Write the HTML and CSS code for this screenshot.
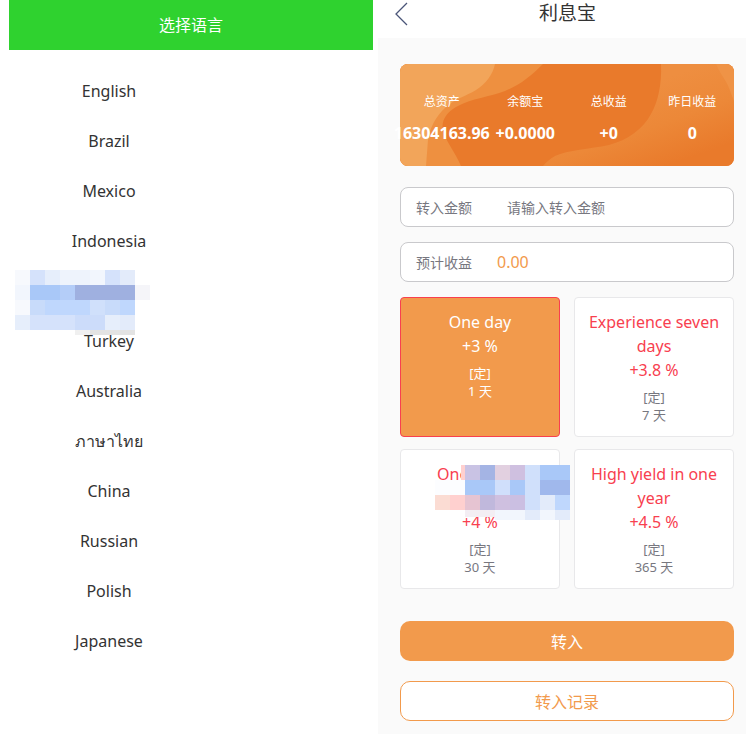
FILE: index.html
```html
<!DOCTYPE html>
<html lang="zh-CN">
<head>
  <meta charset="UTF-8">
  <meta name="viewport" content="width=device-width, initial-scale=1">
  <title>利息宝</title>
  <link rel="stylesheet" href="styles.css">
</head>
<body>
  <div class="page">
    <!-- language picker -->
    <section class="lang-panel">
      <div class="lang-title">选择语言</div>
      <ul class="lang-list">
        <li>English</li>
        <li>Brazil</li>
        <li>Mexico</li>
        <li>Indonesia</li>
        <li></li>
        <li>Turkey</li>
        <li>Australia</li>
        <li>ภาษาไทย</li>
        <li>China</li>
        <li>Russian</li>
        <li>Polish</li>
        <li>Japanese</li>
      </ul>
    </section>

    <!-- interest product -->
    <section class="bao-panel">
      <div class="bao-head">
        <svg class="back-icon" viewBox="0 0 14 24" width="14" height="24">
          <path d="M13 1 L2 12 L13 23" fill="none" stroke="#4a5578" stroke-width="1.3"/>
        </svg>
        <span class="bao-title">利息宝</span>
      </div>

      <div class="bao-body">
        <div class="summary">
          <svg class="summary-bg" viewBox="0 0 334 102" preserveAspectRatio="none">
            <defs>
              <linearGradient id="wave" x1="0.55" y1="0.2" x2="0.95" y2="0.8">
                <stop offset="0" stop-color="#ee8e40"/>
                <stop offset="0.5" stop-color="#ec8838"/>
                <stop offset="1" stop-color="#e97a2b"/>
              </linearGradient>
            </defs>
            <rect width="334" height="102" fill="#e97a2b"/>
            <path d="M143 0 C131 12 120 21 105 27 C90 33 72 34 56 43 C46 49 41 57 43 66 C46 78 54 86 61 102 L0 102 L0 0 Z" fill="#ee9040"/>
            <path d="M95 0 C93 10 86 20 76 26 C66 32 55 35 46 43 C35 53 30 64 28 76 L26 102 L0 102 L0 0 Z" fill="#f2a55a"/>
            <path d="M261 0 C262 20 258 38 251 50 C243 65 228 76 209 81 C190 85 168 86 155 92 C150 95 146 98 143 102 L334 102 L334 0 Z" fill="url(#wave)"/>
            <path d="M316 0 C320 10 326 16 329 24 L334 37 L334 0 Z" fill="#ef9346"/>
          </svg>
          <div class="stat"><span class="stat-label">总资产</span><span class="stat-value">16304163.96</span></div>
          <div class="stat"><span class="stat-label">余额宝</span><span class="stat-value">+0.0000</span></div>
          <div class="stat"><span class="stat-label">总收益</span><span class="stat-value">+0</span></div>
          <div class="stat"><span class="stat-label">昨日收益</span><span class="stat-value">0</span></div>
        </div>

        <div class="field">
          <span class="field-label">转入金额</span>
          <span class="field-hint">请输入转入金额</span>
        </div>
        <div class="field">
          <span class="field-label">预计收益</span>
          <span class="field-money">0.00</span>
        </div>

        <div class="plans">
          <div class="plan plan-on">
            <div class="plan-name">One day</div>
            <div class="plan-rate">+3 %</div>
            <div class="plan-type">[定]</div>
            <div class="plan-days">1 天</div>
          </div>
          <div class="plan">
            <div class="plan-name">Experience seven days</div>
            <div class="plan-rate">+3.8 %</div>
            <div class="plan-type">[定]</div>
            <div class="plan-days">7 天</div>
          </div>
          <div class="plan">
            <div class="plan-name">One month<br>&nbsp;</div>
            <div class="plan-rate">+4 %</div>
            <div class="plan-type">[定]</div>
            <div class="plan-days">30 天</div>
          </div>
          <div class="plan">
            <div class="plan-name">High yield in one year</div>
            <div class="plan-rate">+4.5 %</div>
            <div class="plan-type">[定]</div>
            <div class="plan-days">365 天</div>
          </div>
        </div>

        <button class="btn btn-main">转入</button>
        <button class="btn btn-line">转入记录</button>
      </div>
    </section>
  </div>

  <!-- pixelated patches that cover part of the shot -->
  <div class="mosaic mosaic-left">
    <i class="c1"></i><i class="c2"></i><i class="c3"></i><i class="c4"></i><i class="c4"></i><i class="c5"></i><i class="c2"></i><i class="c6"></i><i></i>
    <i class="c5"></i><i class="c7"></i><i class="c7"></i><i class="c8"></i><i class="c9"></i><i class="c9"></i><i class="c9"></i><i class="c9"></i><i class="c10"></i>
    <i class="c1"></i><i class="c11"></i><i class="c12"></i><i class="c12"></i><i class="c12"></i><i class="c13"></i><i class="c11"></i><i class="c12"></i><i></i>
    <i class="c3"></i><i class="c2"></i><i class="c2"></i><i class="c2"></i><i class="c14"></i><i class="c14"></i><i class="c3"></i><i class="c6"></i><i></i>
    <i></i><i></i><i></i><i></i><i class="g1"></i><i class="g2"></i><i class="g2"></i><i class="g2"></i><i></i>
  </div>
  <div class="mosaic mosaic-right">
    <i></i><i class="p14"></i><i class="p1"></i><i class="p2"></i><i class="p3"></i><i class="p4"></i><i class="c13"></i><i class="c7"></i><i class="c7"></i>
    <i class="p6"></i><i class="p6"></i><i class="c7"></i><i class="c7"></i><i class="p7"></i><i class="c7"></i><i class="c13"></i><i class="p11"></i><i class="p11"></i>
    <i class="p8"></i><i class="p12"></i><i class="p13"></i><i class="p9"></i><i class="p4"></i><i class="p5"></i><i class="c13"></i><i class="c6"></i><i class="c12"></i>
    <i></i><i></i><i class="p10"></i><i class="p10"></i><i class="c5"></i><i class="c5"></i><i class="c6"></i><i class="c5"></i><i class="c6"></i>
  </div>
</body>
</html>
```

FILE: styles.css
```css
* {
  box-sizing: border-box;
  margin: 0;
  padding: 0;
}

body {
  background: #fff;
  font-family: 'Noto Sans', 'Noto Sans CJK SC', sans-serif;
  color: #333;
  position: relative;
}

.page {
  display: flex;
  align-items: flex-start;
  padding-left: 9px;
}

/* left: language list */
.lang-panel {
  width: 364px;
  flex-shrink: 0;
}

.lang-title {
  background: #2fd22f;
  color: #fff;
  height: 50px;
  line-height: 50px;
  text-align: center;
  font-size: 16px;
}

.lang-list {
  list-style: none;
  width: 200px;
  padding-top: 16px;
}

.lang-list li {
  height: 50px;
  line-height: 50px;
  text-align: center;
  font-size: 16px;
}

/* right: product page */
.bao-panel {
  width: 368px;
  margin-left: 5px;
  flex-shrink: 0;
}

.bao-head {
  height: 38px;
  padding-left: 11px;
  display: flex;
  justify-content: center;
  position: relative;
}

.back-icon {
  position: absolute;
  left: 16px;
  top: 2px;
}

.bao-title {
  font-size: 19px;
  line-height: 26px;
}

.bao-body {
  background: #fafafa;
  height: 696px;
  padding: 26px 12px 0 22px;
}

.summary {
  position: relative;
  height: 102px;
  display: grid;
  grid-template-columns: repeat(4, 1fr);
  padding-top: 30px;
  color: #fff;
}

.summary-bg {
  position: absolute;
  left: 0;
  top: 0;
  width: 100%;
  height: 100%;
  border-radius: 8px;
}

.stat {
  position: relative;
  display: flex;
  flex-direction: column;
  align-items: center;
  min-width: 0;
}

.stat-label {
  font-size: 12px;
  line-height: 16px;
  margin-bottom: 15px;
}

.stat-value {
  font-size: 16px;
  font-weight: bold;
  line-height: 16px;
  white-space: nowrap;
}

.field {
  height: 40px;
  margin-top: 15px;
  padding-left: 15px;
  display: flex;
  align-items: center;
  background: #fff;
  border: 1px solid #c9c9cc;
  border-radius: 8px;
  font-size: 14px;
  color: #77777f;
}

.summary + .field {
  margin-top: 21px;
}

.field-label {
  width: 91px;
}

.field-label:has(+ .field-money) {
  width: 81px;
}

.field-money {
  font-size: 16px;
  color: #f29a4c;
}

.plans {
  display: grid;
  grid-template-columns: 160px 160px;
  grid-auto-rows: 140px;
  column-gap: 14px;
  row-gap: 12px;
  margin-top: 15px;
}

.plan {
  background: #fff;
  border: 1px solid #e8e8ea;
  border-radius: 4px;
  padding: 12px 10px 0;
  text-align: center;
  color: #77777f;
}

.plan-name,
.plan-rate {
  font-size: 16px;
  line-height: 24px;
  color: #f8404f;
}

.plan-type {
  margin-top: 6px;
}

.plan-type,
.plan-days {
  font-size: 13px;
  line-height: 18px;
}

.plan-on {
  background: #f29a4c;
  border-color: #f8404f;
  color: #fff;
}

.plan-on .plan-name,
.plan-on .plan-rate {
  color: #fff;
}

.btn {
  display: block;
  width: 100%;
  height: 40px;
  font-family: inherit;
  font-size: 16px;
  border-radius: 10px;
}

.btn-main {
  margin-top: 32px;
  background: #f29a4c;
  border: 0;
  color: #fff;
}

.btn-line {
  margin-top: 20px;
  background: #fff;
  border: 1px solid #f29a4c;
  color: #f29a4c;
}

/* mosaic patches */
.mosaic {
  position: absolute;
  display: grid;
  grid-template-columns: repeat(9, 15px);
}

.mosaic-left {
  left: 15px;
  top: 270px;
  grid-template-rows: 15px 15px 15px 15px 5px;
}

.mosaic-right {
  left: 435px;
  top: 465px;
  grid-template-rows: 15px 15px 15px 10px;
}

.c1 { background: #f7f9fd; }
.c2 { background: #d5e2fb; }
.c3 { background: #e6eefb; }
.c4 { background: #eef3fc; }
.c5 { background: #f2f6fd; }
.c6 { background: #e3ebfa; }
.c7 { background: #a9c8f8; }
.c8 { background: #b4cdf8; }
.c9 { background: #9fb0e0; }
.c10 { background: #f5f5f9; }
.c11 { background: #c8dbfa; }
.c12 { background: #bfd7fd; }
.c13 { background: #d0e0fb; }
.c14 { background: #ccdcfa; }
.g1 { background: #f0f0f0; }
.g2 { background: #e3e3e3; }
.p1 { background: #c9c3e4; }
.p2 { background: #a4b4e4; }
.p3 { background: #e2d0e0; }
.p4 { background: #cfc0e0; }
.p5 { background: #cbbfe2; }
.p6 { background: #fcfdff; }
.p7 { background: #d0dffb; }
.p8 { background: #fbdcd3; }
.p9 { background: #c0b8dc; }
.p10 { background: #f3eef3; height: 7px; }
.p11 { background: #a0b8ec; }
.p12 { background: #ffd0cf; }
.p13 { background: #e6c4d2; }
.p14 { background: linear-gradient(90deg, transparent 11px, #ffd0cf 11px); }
```
